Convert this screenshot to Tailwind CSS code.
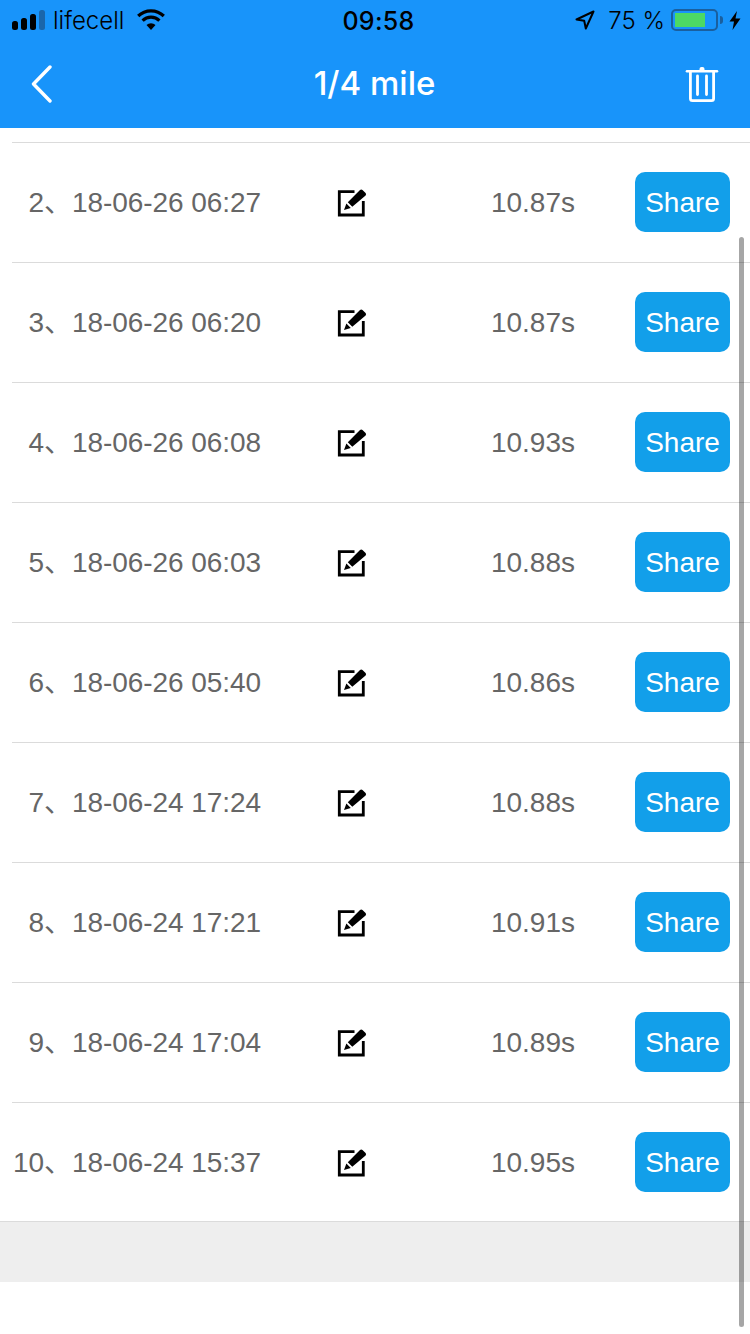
<!DOCTYPE html>
<html lang="en">
<head>
    <meta charset="UTF-8">
    <title>1/4 mile</title>
    <script src="https://cdn.jsdelivr.net/npm/@tailwindcss/browser@4"></script>
</head>
<body class="bg-white">
    <div class="relative w-[750px] h-[1334px] overflow-hidden bg-white font-['Liberation_Sans',sans-serif]">
        <!-- Header -->
        <div class="bg-[#1894fa] h-[128px]">
            <div class="flex items-center h-[40px] text-black font-['Inter',sans-serif] text-[24px]">
                <div class="flex-1 flex items-center pl-[12px]">
                    <svg width="34" height="22" viewBox="0 0 34 22" class="shrink-0">
                        <rect x="0" y="12" width="6" height="9" rx="2.5" fill="#000"/>
                        <rect x="9" y="9" width="6" height="12" rx="2.5" fill="#000"/>
                        <rect x="18" y="5" width="6" height="16" rx="2.5" fill="#000"/>
                        <rect x="27" y="1" width="6" height="20" rx="2.5" fill="#1a66ab"/>
                    </svg>
                    <span class="ml-[7px] pt-[2px] font-light leading-none">lifecell</span>
                    <svg width="30" height="22" viewBox="0 0 30 22" class="ml-[12px] shrink-0">
                        <path d="M15 21 L10.5 16 A6.5 6.5 0 0 1 19.5 16 Z" fill="#000"/>
                        <path d="M6.6 11.6 A12 12 0 0 1 23.4 11.6" fill="none" stroke="#000" stroke-width="3.2"/>
                        <path d="M2.2 7 A18.5 18.5 0 0 1 27.8 7" fill="none" stroke="#000" stroke-width="3.2"/>
                    </svg>
                </div>
                <div class="ml-[4px] pt-[2px] font-medium text-[25px] tracking-[0.3px] leading-none">09:58</div>
                <div class="flex-1 flex items-center justify-end pr-[9px]">
                    <svg width="20" height="20" viewBox="0 0 20 20" class="shrink-0">
                        <path d="M1.5 9.5 L18.5 1.5 L10.8 18.5 L9.2 10.8 Z" fill="none" stroke="#000" stroke-width="2" stroke-linejoin="round"/>
                    </svg>
                    <span class="ml-[13px] pt-[2px] font-light leading-none">75 %</span>
                    <div class="ml-[6px] w-[47px] h-[22px] border-2 border-[#1a5f9e] rounded-[5px] p-[2px] shrink-0">
                        <div class="w-[30px] h-full bg-[#4cd964]"></div>
                    </div>
                    <div class="ml-[2px] w-[3px] h-[8px] bg-[#1a5f9e] rounded-r-[3px] shrink-0"></div>
                    <svg width="12" height="19" viewBox="0 0 12 19" class="ml-[6px] shrink-0">
                        <path d="M8 0 L0.5 10.5 L5 10.5 L3.5 19 L11.5 7.5 L6.5 7.5 Z" fill="#000"/>
                    </svg>
                </div>
            </div>
            <div class="flex items-center h-[88px] pb-[1px]">
                <div class="flex-1 pl-[30px]">
                    <svg width="24" height="38" viewBox="0 0 24 38">
                        <path d="M20 2 L3.5 19 L20 36" fill="none" stroke="#fff" stroke-width="3.4" stroke-linecap="round" stroke-linejoin="round"/>
                    </svg>
                </div>
                <h1 class="text-white font-medium text-[33px] font-['Inter',sans-serif]">1/4 mile</h1>
                <div class="flex-1 flex justify-end pr-[31px]">
                    <svg width="34" height="36" viewBox="0 0 34 36" class="mt-[1px]">
                        <rect x="14.5" y="1" width="5" height="5" rx="2" fill="#fff"/>
                        <path d="M2 5.3 H32" fill="none" stroke="#fff" stroke-width="2.6" stroke-linecap="round"/>
                        <path d="M5.4 6 V32.5 Q5.4 34.6 7.5 34.6 H26.5 Q28.6 34.6 28.6 32.5 V6" fill="none" stroke="#fff" stroke-width="2.8"/>
                        <path d="M12.5 10 V28.5 M21.5 10 V28.5" fill="none" stroke="#fff" stroke-width="2.8" stroke-linecap="round"/>
                    </svg>
                </div>
            </div>
        </div>

        <!-- Records -->
        <div class="pt-[14px]">
            <div class="ml-[12px] h-[120px] border-t border-[#dbdbdb] flex items-center text-[28px] text-[#666666]">
                <div class="w-[249px] text-right whitespace-nowrap tracking-[-0.07px] font-['Liberation_Sans','Noto_Sans_CJK_SC',sans-serif]">2、18-06-26 06:27</div>
                <svg width="30" height="30" viewBox="0 0 30 30" class="ml-[76px] -mt-[1px] shrink-0">
                    <path d="M17.5 4.6 H2.3 V28 H26.3 V14" fill="none" stroke="#000" stroke-width="2.8"/>
                    <path d="M7 23 L9.4 16.6 L13.8 21 Z M10.8 15.2 L23 3 Q24.3 2 25.5 3 L28.6 6 Q29.6 7.2 28.6 8.4 L15.3 19.7 Z" fill="#000"/>
                </svg>
                <div class="w-[208px] text-right">10.87s</div>
                <button class="ml-[60px] -mt-[1px] pt-[2px] w-[95px] h-[60px] rounded-[10px] bg-[#129fea] text-white text-[28px]">Share</button>
            </div>
            <div class="ml-[12px] h-[120px] border-t border-[#dbdbdb] flex items-center text-[28px] text-[#666666]">
                <div class="w-[249px] text-right whitespace-nowrap tracking-[-0.07px] font-['Liberation_Sans','Noto_Sans_CJK_SC',sans-serif]">3、18-06-26 06:20</div>
                <svg width="30" height="30" viewBox="0 0 30 30" class="ml-[76px] -mt-[1px] shrink-0">
                    <path d="M17.5 4.6 H2.3 V28 H26.3 V14" fill="none" stroke="#000" stroke-width="2.8"/>
                    <path d="M7 23 L9.4 16.6 L13.8 21 Z M10.8 15.2 L23 3 Q24.3 2 25.5 3 L28.6 6 Q29.6 7.2 28.6 8.4 L15.3 19.7 Z" fill="#000"/>
                </svg>
                <div class="w-[208px] text-right">10.87s</div>
                <button class="ml-[60px] -mt-[1px] pt-[2px] w-[95px] h-[60px] rounded-[10px] bg-[#129fea] text-white text-[28px]">Share</button>
            </div>
            <div class="ml-[12px] h-[120px] border-t border-[#dbdbdb] flex items-center text-[28px] text-[#666666]">
                <div class="w-[249px] text-right whitespace-nowrap tracking-[-0.07px] font-['Liberation_Sans','Noto_Sans_CJK_SC',sans-serif]">4、18-06-26 06:08</div>
                <svg width="30" height="30" viewBox="0 0 30 30" class="ml-[76px] -mt-[1px] shrink-0">
                    <path d="M17.5 4.6 H2.3 V28 H26.3 V14" fill="none" stroke="#000" stroke-width="2.8"/>
                    <path d="M7 23 L9.4 16.6 L13.8 21 Z M10.8 15.2 L23 3 Q24.3 2 25.5 3 L28.6 6 Q29.6 7.2 28.6 8.4 L15.3 19.7 Z" fill="#000"/>
                </svg>
                <div class="w-[208px] text-right">10.93s</div>
                <button class="ml-[60px] -mt-[1px] pt-[2px] w-[95px] h-[60px] rounded-[10px] bg-[#129fea] text-white text-[28px]">Share</button>
            </div>
            <div class="ml-[12px] h-[120px] border-t border-[#dbdbdb] flex items-center text-[28px] text-[#666666]">
                <div class="w-[249px] text-right whitespace-nowrap tracking-[-0.07px] font-['Liberation_Sans','Noto_Sans_CJK_SC',sans-serif]">5、18-06-26 06:03</div>
                <svg width="30" height="30" viewBox="0 0 30 30" class="ml-[76px] -mt-[1px] shrink-0">
                    <path d="M17.5 4.6 H2.3 V28 H26.3 V14" fill="none" stroke="#000" stroke-width="2.8"/>
                    <path d="M7 23 L9.4 16.6 L13.8 21 Z M10.8 15.2 L23 3 Q24.3 2 25.5 3 L28.6 6 Q29.6 7.2 28.6 8.4 L15.3 19.7 Z" fill="#000"/>
                </svg>
                <div class="w-[208px] text-right">10.88s</div>
                <button class="ml-[60px] -mt-[1px] pt-[2px] w-[95px] h-[60px] rounded-[10px] bg-[#129fea] text-white text-[28px]">Share</button>
            </div>
            <div class="ml-[12px] h-[120px] border-t border-[#dbdbdb] flex items-center text-[28px] text-[#666666]">
                <div class="w-[249px] text-right whitespace-nowrap tracking-[-0.07px] font-['Liberation_Sans','Noto_Sans_CJK_SC',sans-serif]">6、18-06-26 05:40</div>
                <svg width="30" height="30" viewBox="0 0 30 30" class="ml-[76px] -mt-[1px] shrink-0">
                    <path d="M17.5 4.6 H2.3 V28 H26.3 V14" fill="none" stroke="#000" stroke-width="2.8"/>
                    <path d="M7 23 L9.4 16.6 L13.8 21 Z M10.8 15.2 L23 3 Q24.3 2 25.5 3 L28.6 6 Q29.6 7.2 28.6 8.4 L15.3 19.7 Z" fill="#000"/>
                </svg>
                <div class="w-[208px] text-right">10.86s</div>
                <button class="ml-[60px] -mt-[1px] pt-[2px] w-[95px] h-[60px] rounded-[10px] bg-[#129fea] text-white text-[28px]">Share</button>
            </div>
            <div class="ml-[12px] h-[120px] border-t border-[#dbdbdb] flex items-center text-[28px] text-[#666666]">
                <div class="w-[249px] text-right whitespace-nowrap tracking-[-0.07px] font-['Liberation_Sans','Noto_Sans_CJK_SC',sans-serif]">7、18-06-24 17:24</div>
                <svg width="30" height="30" viewBox="0 0 30 30" class="ml-[76px] -mt-[1px] shrink-0">
                    <path d="M17.5 4.6 H2.3 V28 H26.3 V14" fill="none" stroke="#000" stroke-width="2.8"/>
                    <path d="M7 23 L9.4 16.6 L13.8 21 Z M10.8 15.2 L23 3 Q24.3 2 25.5 3 L28.6 6 Q29.6 7.2 28.6 8.4 L15.3 19.7 Z" fill="#000"/>
                </svg>
                <div class="w-[208px] text-right">10.88s</div>
                <button class="ml-[60px] -mt-[1px] pt-[2px] w-[95px] h-[60px] rounded-[10px] bg-[#129fea] text-white text-[28px]">Share</button>
            </div>
            <div class="ml-[12px] h-[120px] border-t border-[#dbdbdb] flex items-center text-[28px] text-[#666666]">
                <div class="w-[249px] text-right whitespace-nowrap tracking-[-0.07px] font-['Liberation_Sans','Noto_Sans_CJK_SC',sans-serif]">8、18-06-24 17:21</div>
                <svg width="30" height="30" viewBox="0 0 30 30" class="ml-[76px] -mt-[1px] shrink-0">
                    <path d="M17.5 4.6 H2.3 V28 H26.3 V14" fill="none" stroke="#000" stroke-width="2.8"/>
                    <path d="M7 23 L9.4 16.6 L13.8 21 Z M10.8 15.2 L23 3 Q24.3 2 25.5 3 L28.6 6 Q29.6 7.2 28.6 8.4 L15.3 19.7 Z" fill="#000"/>
                </svg>
                <div class="w-[208px] text-right">10.91s</div>
                <button class="ml-[60px] -mt-[1px] pt-[2px] w-[95px] h-[60px] rounded-[10px] bg-[#129fea] text-white text-[28px]">Share</button>
            </div>
            <div class="ml-[12px] h-[120px] border-t border-[#dbdbdb] flex items-center text-[28px] text-[#666666]">
                <div class="w-[249px] text-right whitespace-nowrap tracking-[-0.07px] font-['Liberation_Sans','Noto_Sans_CJK_SC',sans-serif]">9、18-06-24 17:04</div>
                <svg width="30" height="30" viewBox="0 0 30 30" class="ml-[76px] -mt-[1px] shrink-0">
                    <path d="M17.5 4.6 H2.3 V28 H26.3 V14" fill="none" stroke="#000" stroke-width="2.8"/>
                    <path d="M7 23 L9.4 16.6 L13.8 21 Z M10.8 15.2 L23 3 Q24.3 2 25.5 3 L28.6 6 Q29.6 7.2 28.6 8.4 L15.3 19.7 Z" fill="#000"/>
                </svg>
                <div class="w-[208px] text-right">10.89s</div>
                <button class="ml-[60px] -mt-[1px] pt-[2px] w-[95px] h-[60px] rounded-[10px] bg-[#129fea] text-white text-[28px]">Share</button>
            </div>
            <div class="ml-[12px] h-[120px] border-t border-[#dbdbdb] flex items-center text-[28px] text-[#666666]">
                <div class="w-[249px] text-right whitespace-nowrap tracking-[-0.07px] font-['Liberation_Sans','Noto_Sans_CJK_SC',sans-serif]">10、18-06-24 15:37</div>
                <svg width="30" height="30" viewBox="0 0 30 30" class="ml-[76px] -mt-[1px] shrink-0">
                    <path d="M17.5 4.6 H2.3 V28 H26.3 V14" fill="none" stroke="#000" stroke-width="2.8"/>
                    <path d="M7 23 L9.4 16.6 L13.8 21 Z M10.8 15.2 L23 3 Q24.3 2 25.5 3 L28.6 6 Q29.6 7.2 28.6 8.4 L15.3 19.7 Z" fill="#000"/>
                </svg>
                <div class="w-[208px] text-right">10.95s</div>
                <button class="ml-[60px] -mt-[1px] pt-[2px] w-[95px] h-[60px] rounded-[10px] bg-[#129fea] text-white text-[28px]">Share</button>
            </div>
            <div class="relative -mt-px h-[61px] border-t border-[#dbdbdb] bg-[#eeeeee]"></div>
        </div>

        <!-- Scrollbar -->
        <div class="absolute left-[739px] top-[237px] w-[5px] h-[1090px] rounded-full bg-black/35"></div>
    </div>
</body>
</html>
